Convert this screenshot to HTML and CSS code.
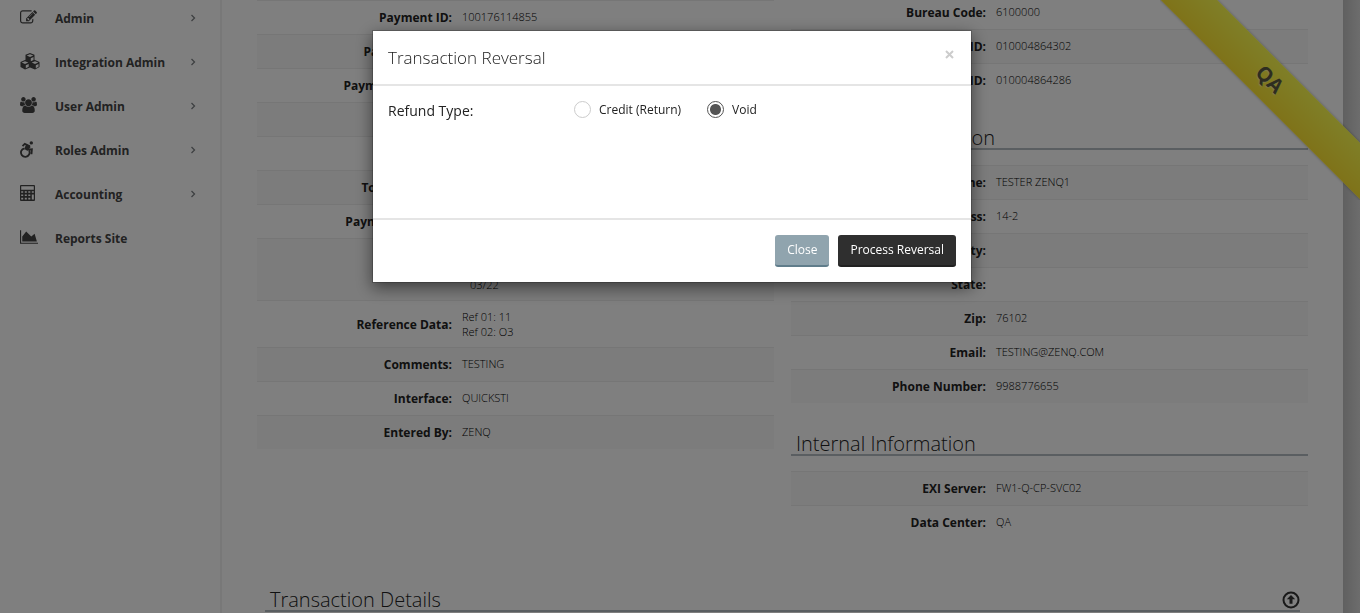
FILE: index.html
```html
<!DOCTYPE html>
<html lang="en">
<head>
<meta charset="utf-8">
<title>Transaction Reversal</title>
<link rel="stylesheet" href="styles.css">
</head>
<body>
<div class="page">
  <nav class="sidebar">
    <a class="nav-item" href="#">
      <span class="nav-icon"><svg width="17" height="17" viewBox="0 0 1792 1792"><path d="M888 1184l116-116-152-152-116 116v56h96v96h56zm440-720q-16-16-33 1l-350 350q-17 17-1 33t33-1l350-350q17-17 1-33zm80 594v190q0 119-84.5 203.5t-203.5 84.500h-832q-119 0-203.500-84.500t-84.500-203.500v-832q0-119 84.500-203.500t203.500-84.500h832q63 0 117 25 15 7 18 23 3 17-9 29l-49 49q-14 14-32 8-23-6-45-6h-832q-66 0-113 47t-47 113v832q0 66 47 113t113 47h832q66 0 113-47t47-113v-126q0-13 9-22l64-64q15-15 35-7t20 29zm-96-738l288 288-672 672h-288v-288zm444 132l-92 92-288-288 92-92q28-28 68-28t68 28l152 152q28 28 28 68t-28 68z"/></svg></span>
      <span class="nav-label">Admin</span>
      <svg class="chevron" width="6" height="8" viewBox="0 0 6 8"><path d="M1.500 1l3 3-3 3"/></svg>
    </a>
    <a class="nav-item" href="#">
      <span class="nav-icon"><svg width="20" height="17" viewBox="0 0 20 17"><path d="M10 0l4.500 1.800v5L19.500 9v5L15 16.500 10 14.500 5 16.500.500 14V9l5-2.200v-5z"/><path class="cut" d="M6.700 2.500L10 3.900l3.300-1.400L10 1.300zM10.800 5.200v3l2.700-1.200V4zM1.700 9.600L5 11l3.300-1.400L5 8.200zM5.800 12.300v3l2.900-1.500V11zM11.700 9.600L15 11l3.300-1.400L15 8.200zM15.800 12.300v3l2.700-1.500V11z"/></svg></span>
      <span class="nav-label">Integration Admin</span>
      <svg class="chevron" width="6" height="8" viewBox="0 0 6 8"><path d="M1.500 1l3 3-3 3"/></svg>
    </a>
    <a class="nav-item" href="#">
      <span class="nav-icon"><svg width="17" height="16" viewBox="0 0 1920 1792"><path d="M593 896q-162 5-265 128h-134q-82 0-138-40.500t-56-118.500q0-353 124-353 6 0 43.500 21t97.500 42.500 119 21.500q67 0 133-23-5 37-5 66 0 139 81 256zm1071 637q0 120-73 189.500t-194 69.500h-874q-121 0-194-69.500t-73-189.500q0-53 3.500-103.500t14-109 26.500-108.500 43-97.500 62-81 85.500-53.500 111.500-20q10 0 43 21.500t73 48 107 48 135 21.500 135-21.500 107-48 73-48 43-21.500q61 0 111.500 20t85.500 53.500 62 81 43 97.500 26.500 108.500 14 109 3.500 103.500zm-1024-1277q0 106-75 181t-181 75-181-75-75-181 75-181 181-75 181 75 75 181zm704 384q0 159-112.500 271.500t-271.500 112.500-271.500-112.500-112.500-271.500 112.500-271.500 271.500-112.500 271.500 112.500 112.500 271.500zm576 225q0 78-56 118.500t-138 40.500h-134q-103-123-265-128 81-117 81-256 0-29-5-66 66 23 133 23 59 0 119-21.500t97.500-42.500 43.500-21q124 0 124 353zm-128-609q0 106-75 181t-181 75-181-75-75-181 75-181 181-75 181 75 75 181z"/></svg></span>
      <span class="nav-label">User Admin</span>
      <svg class="chevron" width="6" height="8" viewBox="0 0 6 8"><path d="M1.500 1l3 3-3 3"/></svg>
    </a>
    <a class="nav-item" href="#">
      <span class="nav-icon"><svg width="14" height="17" viewBox="0 0 14 17"><circle cx="11.300" cy="1.900" r="1.700"/><path class="line" d="M2.500 5.200l2.300-2.400 4.200 2-2.800 3.600M6.500 8.600l5.400-.3-.4 5M4.500 7.300a4.300 4.300 0 1 0 4.600 6.200 4.300 4.300 0 0 0 .1-3.800"/><path d="M6 3.300l3.500 1.400 1.200 1.400-3 3.400-3.400-1.300z"/></svg></span>
      <span class="nav-label">Roles Admin</span>
      <svg class="chevron" width="6" height="8" viewBox="0 0 6 8"><path d="M1.500 1l3 3-3 3"/></svg>
    </a>
    <a class="nav-item" href="#">
      <span class="nav-icon"><svg width="15" height="16" viewBox="0 0 15 16"><path fill-rule="evenodd" d="M1 0h13q1 0 1 1v14q0 1-1 1H1q-1 0-1-1V1q0-1 1-1zM1.200 1.200v3.600h12.600V1.200zM1.200 6.200v1.600h2V6.200zM4.800 6.200v1.600h2V6.200zM8.300 6.200v1.600h2V6.200zM11.800 6.200v1.600h2V6.200zM1.200 9.400V11h2V9.400zM4.800 9.400V11h2V9.400zM8.300 9.400V11h2V9.400zM1.200 12.800v1.800h2v-1.800zM4.800 12.800v1.800h2v-1.800zM8.300 12.800v1.800h2v-1.800zM11.800 9.400v5.200h2V9.400z"/></svg></span>
      <span class="nav-label">Accounting</span>
      <svg class="chevron" width="6" height="8" viewBox="0 0 6 8"><path d="M1.500 1l3 3-3 3"/></svg>
    </a>
    <a class="nav-item" href="#">
      <span class="nav-icon"><svg width="18" height="16" viewBox="0 0 2048 1792"><path d="M2048 1536v128h-2048v-1536h128v1408h1920zm-384-1024l256 896h-1664v-576l448-576 576 576z"/></svg></span>
      <span class="nav-label">Reports Site</span>
    </a>
  </nav>
  <main class="content">
    <div class="columns">
      <section class="column">
        <table class="info even">
          <tr><th scope="row">Payment ID:</th><td>100176114855</td></tr>
          <tr><th scope="row">Payment Date:</th><td></td></tr>
          <tr><th scope="row">Payment Amount:</th><td></td></tr>
          <tr><th></th><td></td></tr>
          <tr><th></th><td></td></tr>
          <tr><th scope="row">Total Payment:</th><td></td></tr>
          <tr><th scope="row">Payment Method:</th><td></td></tr>
          <tr><th></th><td><br><br><span class="expiry">03/22</span></td></tr>
          <tr><th scope="row">Reference Data:</th><td>Ref 01: 11<br>Ref 02: O3</td></tr>
          <tr><th scope="row">Comments:</th><td>TESTING</td></tr>
          <tr><th scope="row">Interface:</th><td>QUICKSTI</td></tr>
          <tr><th scope="row">Entered By:</th><td>ZENQ</td></tr>
        </table>
      </section>
      <section class="column column-party">
        <table class="info even">
          <tr><th scope="row">Bureau Code:</th><td>6100000</td></tr>
          <tr><th scope="row">ID:</th><td>010004864302</td></tr>
          <tr><th scope="row">ID:</th><td>010004864286</td></tr>
        </table>
        <h2 class="section-title">Customer Information</h2>
        <table class="info odd">
          <tr><th scope="row">Name:</th><td>TESTER ZENQ1</td></tr>
          <tr><th scope="row">Address:</th><td>14-2</td></tr>
          <tr><th scope="row">City:</th><td></td></tr>
          <tr><th scope="row">State:</th><td></td></tr>
          <tr><th scope="row">Zip:</th><td>76102</td></tr>
          <tr><th scope="row">Email:</th><td>TESTING@ZENQ.COM</td></tr>
          <tr><th scope="row">Phone Number:</th><td>9988776655</td></tr>
        </table>
        <h2 class="section-title">Internal Information</h2>
        <table class="info odd">
          <tr><th scope="row">EXI Server:</th><td>FW1-Q-CP-SVC02</td></tr>
          <tr><th scope="row">Data Center:</th><td>QA</td></tr>
        </table>
      </section>
    </div>
    <div class="details-bar">
      <h2 class="section-title">Transaction Details</h2>
      <button class="to-top" type="button" aria-label="Back to top"><svg width="18" height="18" viewBox="0 0 18 18"><circle cx="9" cy="9" r="7.500"/><path d="M9 4l4.200 4.300h-2.700v4.500h-3V8.300H4.800z"/></svg></button>
    </div>
  </main>
  <div class="gutter"></div>
  <div class="ribbon-box"><span class="ribbon">QA</span></div>
</div>
<div class="overlay">
  <div class="modal" role="dialog" aria-modal="true" aria-labelledby="modal-title">
    <header class="modal-header">
      <h1 class="modal-title" id="modal-title">Transaction Reversal</h1>
      <button class="dismiss" type="button" aria-label="Dismiss"><svg width="9" height="9" viewBox="0 0 9 9"><path d="M1 1l7 7M8 1L1 8"/></svg></button>
    </header>
    <div class="modal-body">
      <span class="refund-label" id="refund-label">Refund Type:</span>
      <div class="options" role="radiogroup" aria-labelledby="refund-label">
        <label class="option"><input type="radio" name="refund" value="credit">Credit (Return)</label>
        <label class="option"><input type="radio" name="refund" value="void" checked>Void</label>
      </div>
    </div>
    <footer class="modal-footer">
      <button class="btn btn-close" type="button">Close</button>
      <button class="btn btn-process" type="button">Process Reversal</button>
    </footer>
  </div>
</div>
</body>
</html>
```
FILE: styles.css
```css
* { box-sizing: border-box; }

body {
  margin: 0;
  height: 100vh;
  overflow: hidden;
  background: #fff;
  color: #222;
  font-family: "Open Sans", "Noto Sans", sans-serif;
  font-size: 12px;
}

.page {
  position: relative;
  display: flex;
  height: 100vh;
  overflow: hidden;
}

.sidebar {
  flex: 0 0 222px;
  border-right: 2px solid #f0f0f0;
}

.nav-item {
  display: flex;
  align-items: center;
  height: 44px;
  padding: 0 24px 0 20px;
  color: #444;
  font-size: 12px;
  font-weight: 700;
  text-decoration: none;
}

.nav-item:first-child { margin-top: -4px; }

.nav-icon {
  display: flex;
  flex: 0 0 35px;
  padding-bottom: 2px;
  fill: #444;
}

.nav-icon .cut { fill: #fff; }

.nav-icon .line {
  fill: none;
  stroke: #444;
  stroke-width: 1.8;
}

.nav-label { flex: 1; }

.chevron {
  fill: none;
  stroke: #7c8084;
  stroke-width: 1.3;
}

.content {
  flex: 1;
  min-width: 0;
  padding: 0 35px;
}

.columns {
  display: flex;
  gap: 17px;
  min-height: 544px;
}

.column { flex: 1; }

.column-party { margin-top: -5px; }

.info {
  width: 100%;
  border-collapse: separate;
  border-spacing: 0;
  table-layout: fixed;
}

.info th,
.info td {
  height: 34px;
  padding: 8px 5px;
  border-top: 1px solid #ececec;
}

.info th {
  width: 200px;
  text-align: right;
  font-size: 12px;
  font-weight: 700;
  line-height: 17px;
}

.info td {
  color: #000;
  font-size: 11px;
  font-weight: 300;
  line-height: 15px;
  vertical-align: top;
}

.info.even tr:nth-child(even),
.info.odd tr:nth-child(odd) { background: #f9f9f9; }

.expiry { padding-left: 8px; }

.section-title {
  margin: 0 0 15px;
  padding: 31px 5px 0;
  border-bottom: 2px solid #b4bcc2;
  font-size: 20px;
  font-weight: 300;
  line-height: 20px;
}

.details-bar {
  position: relative;
  margin: 15px 8px 0;
}

.to-top {
  position: absolute;
  right: 0;
  bottom: 3px;
  display: flex;
  padding: 0;
  border: 0;
  background: none;
  fill: #333;
}

.to-top circle {
  fill: none;
  stroke: #333;
  stroke-width: 2;
}

.gutter {
  flex: 0 0 17px;
  background: linear-gradient(90deg, #c0c0c0, #dadada);
}

.ribbon-box {
  position: absolute;
  top: 0;
  right: 0;
  width: 200px;
  height: 200px;
  overflow: hidden;
}

.ribbon {
  position: absolute;
  top: 60px;
  left: -41px;
  width: 300px;
  height: 40px;
  background: linear-gradient(#fefe50, #ffe632);
  box-shadow: 0 0 3px rgba(0, 0, 0, 0.3);
  color: #5c5a40;
  font-size: 20px;
  font-weight: 700;
  line-height: 38px;
  text-align: center;
  text-shadow: 0 1px 1px #fff8b0;
  transform: rotate(45deg);
}

.overlay {
  position: fixed;
  inset: 0;
  padding: 30px 16px 0 0;
  background: rgba(0, 0, 0, 0.5);
}

.modal {
  width: 600px;
  max-width: 100%;
  margin: 0 auto;
  border: 1px solid rgba(0, 0, 0, 0.2);
  background: #fff;
  background-clip: padding-box;
  box-shadow: 0 5px 15px rgba(0, 0, 0, 0.5);
}

.modal-header {
  display: flex;
  align-items: center;
  justify-content: space-between;
  padding: 15px;
  border-bottom: 2px solid #e5e5e5;
}

.modal-title {
  margin: 0;
  font-size: 17px;
  font-weight: 300;
  line-height: 23px;
}

.dismiss {
  display: flex;
  margin: 0 2px 6px 0;
  padding: 0;
  border: 0;
  background: none;
  stroke: #ccc;
  stroke-width: 2;
}

.modal-body {
  display: flex;
  min-height: 132px;
  padding: 15px;
}

.refund-label {
  width: 186px;
  font-size: 14px;
  line-height: 20px;
}

.options {
  display: flex;
  align-items: flex-start;
  gap: 26px;
}

.option {
  display: flex;
  align-items: center;
  gap: 8px;
  line-height: 17px;
}

.option input {
  width: 17px;
  height: 17px;
  margin: 0;
  appearance: none;
  border: 1px solid #ccc;
  border-radius: 50%;
  background: #fff;
}

.option input:checked {
  border-color: #555;
  background: radial-gradient(circle, #555 5px, #fff 6px);
}

.modal-footer {
  display: flex;
  justify-content: flex-end;
  gap: 9px;
  padding: 15px;
  border-top: 2px solid #e5e5e5;
}

.btn {
  height: 32px;
  padding: 0 12px 2px;
  border: 0;
  border-bottom: 2px solid;
  border-radius: 3px;
  color: #fff;
  font-family: inherit;
  font-size: 12px;
}

.btn-close {
  border-color: #607d8b;
  background: #90a4ae;
}

.btn-process {
  border-color: #212121;
  background: #2f2f2f;
}
```
